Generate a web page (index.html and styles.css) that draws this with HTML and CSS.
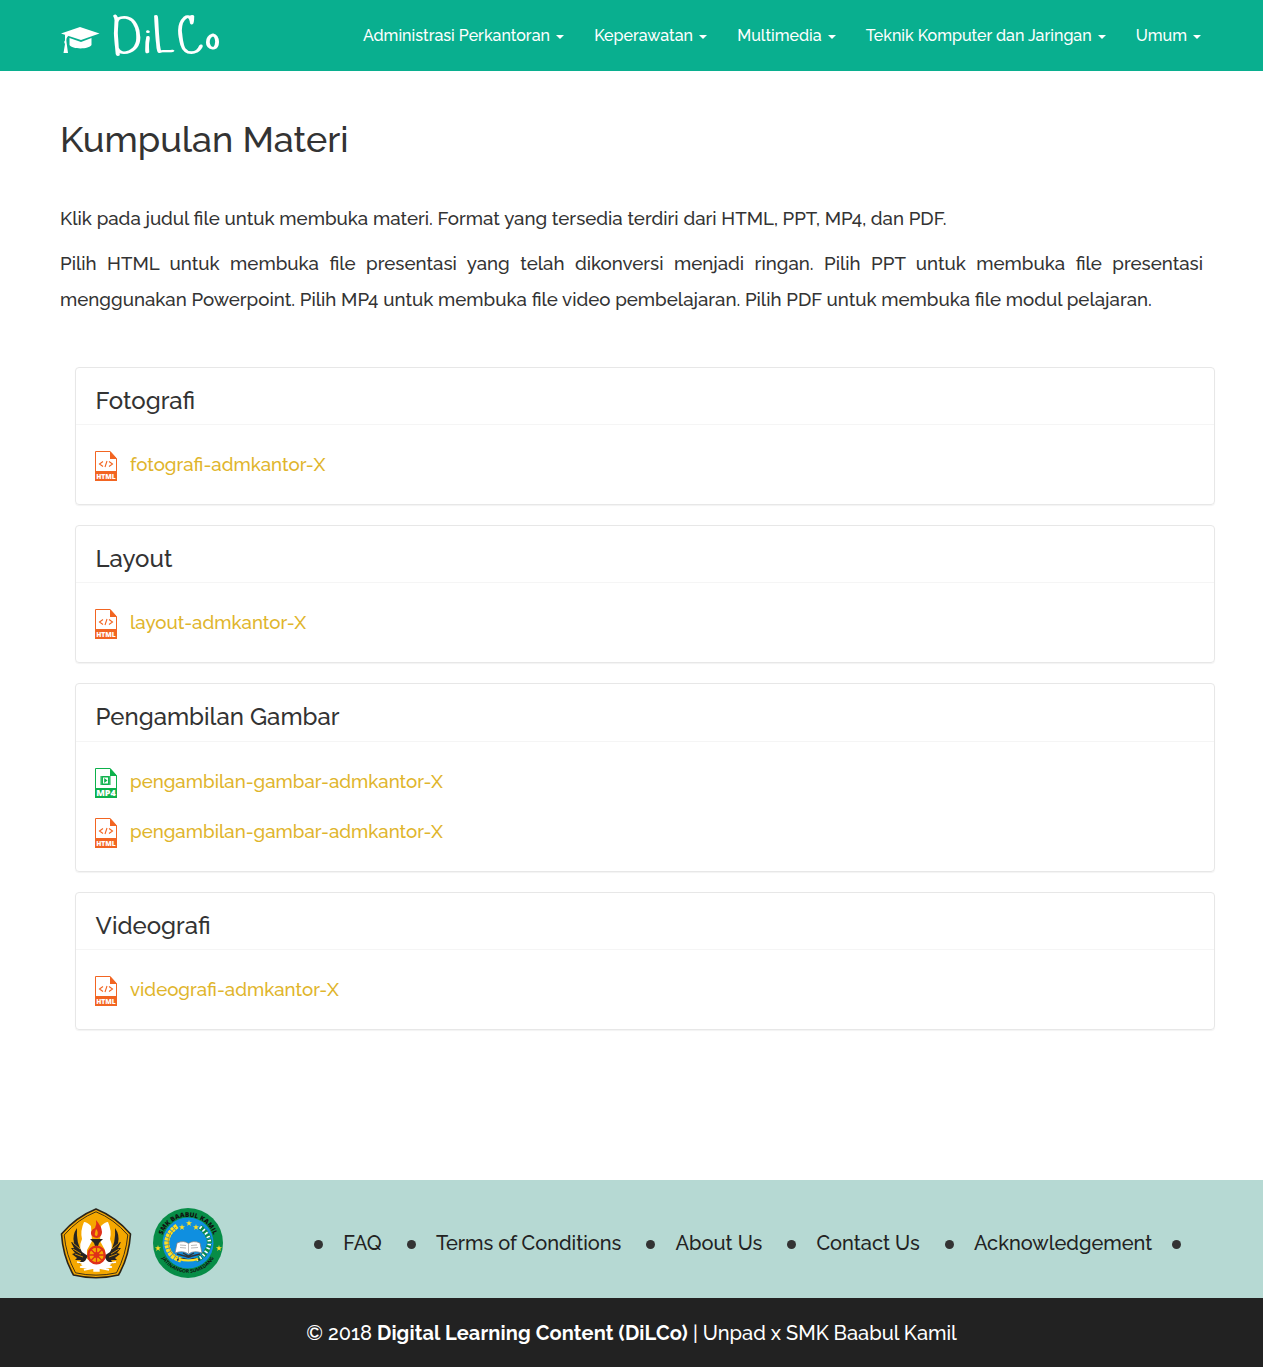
FILE: index.html
```html
<!DOCTYPE html>
<html lang="id">
<head>
<meta charset="utf-8">
<title>DiLCo - Kumpulan Materi</title>
<link rel="stylesheet" href="styles.css">
</head>
<body>
<svg class="defs" aria-hidden="true">
  <symbol id="icon-html" viewBox="0 0 22 30">
    <path d="M.5.5H15L21.500 7.500V29.500H.5z" fill="#fff" stroke="#f26522"/>
    <path d="M15 0L22 8H15z" fill="#f26522"/>
    <path d="M0 20H22V30H0z" fill="#f26522"/>
    <path d="M8 10.500L4.500 13L8 15.500M14 10.500L17.500 13L14 15.500M12 10L10 16" fill="none" stroke="#f26522" stroke-width="1.100"/>
    <text x="1.200" y="27.500" textLength="19.600" lengthAdjust="spacingAndGlyphs" class="icon-label">HTML</text>
  </symbol>
  <symbol id="icon-mp4" viewBox="0 0 22 30">
    <path d="M.5.5H15L21.500 7.500V29.500H.5z" fill="#fff" stroke="#0db14b"/>
    <path d="M15 0L22 8H15z" fill="#0db14b"/>
    <path d="M0 20H22V30H0z" fill="#0db14b"/>
    <path d="M5.500 8H15.500V17H5.500z" fill="#0db14b"/>
    <path d="M8 9.500H13V15.500H8z" fill="#fff"/>
    <path d="M9.200 10L12.500 12.500L9.200 15z" fill="#0db14b"/>
    <path d="M6.700 8.500V17M14.300 8.500V17" stroke="#fff" stroke-width=".4" stroke-dasharray="1 1"/>
    <text x="1.200" y="28.300" textLength="19.600" lengthAdjust="spacingAndGlyphs" class="icon-label icon-label-lg">MP4</text>
  </symbol>
</svg>

<header class="navbar">
  <a class="brand" href="#">
    <svg class="cap" viewBox="0 0 40 28" width="40" height="28">
      <path d="M1 7.500L20 1L39.500 7.500L21 14z" fill="#fff"/>
      <path d="M9.500 12L21 16L31.500 12V19C29 23.500 12 23.500 9.500 19z" fill="#fff"/>
      <path d="M5 8.500L9 9.500C6.500 11 6 13 6.500 16L8 27H3.500L5 18C4 16.500 4 15.500 5 14.500z" fill="#fff"/>
    </svg>
    <span class="wordmark">Di<span class="drop">L</span>C<span class="raise">o</span></span>
  </a>
  <nav class="menu">
    <a href="#">Administrasi Perkantoran</a>
    <a href="#">Keperawatan</a>
    <a href="#">Multimedia</a>
    <a href="#">Teknik Komputer dan Jaringan</a>
    <a href="#">Umum</a>
  </nav>
</header>

<main class="content">
  <h1>Kumpulan Materi</h1>
  <p class="lead">Klik pada judul file untuk membuka materi. Format yang tersedia terdiri dari HTML, PPT, MP4, dan PDF.</p>
  <p class="lead">Pilih HTML untuk membuka file presentasi yang telah dikonversi menjadi ringan. Pilih PPT untuk membuka file presentasi menggunakan Powerpoint. Pilih MP4 untuk membuka file video pembelajaran. Pilih PDF untuk membuka file modul pelajaran.</p>

  <div class="cards">
    <section class="card">
      <h2>Fotografi</h2>
      <ul>
        <li><svg class="file"><use href="#icon-html"/></svg><a href="#">fotografi-admkantor-X</a></li>
      </ul>
    </section>
    <section class="card">
      <h2>Layout</h2>
      <ul>
        <li><svg class="file"><use href="#icon-html"/></svg><a href="#">layout-admkantor-X</a></li>
      </ul>
    </section>
    <section class="card">
      <h2>Pengambilan Gambar</h2>
      <ul>
        <li><svg class="file"><use href="#icon-mp4"/></svg><a href="#">pengambilan-gambar-admkantor-X</a></li>
        <li><svg class="file"><use href="#icon-html"/></svg><a href="#">pengambilan-gambar-admkantor-X</a></li>
      </ul>
    </section>
    <section class="card">
      <h2>Videografi</h2>
      <ul>
        <li><svg class="file"><use href="#icon-html"/></svg><a href="#">videografi-admkantor-X</a></li>
      </ul>
    </section>
  </div>
</main>

<footer>
  <div class="footer-top">
    <svg class="seal" viewBox="0 0 72 72" width="72" height="72">
      <path d="M36 2Q56 10 70.500 27Q69 50 58.500 68Q36 73.500 13.500 68Q3 50 1.500 27Q16 10 36 2z" fill="#f5a800" stroke="#2a2418" stroke-width="1.600" stroke-linejoin="round"/>
      <path d="M36 4.800Q54 12 67.800 28Q66 48 56.500 65.800Q36 70.500 15.500 65.800Q6 48 4.200 28Q18 12 36 4.800z" fill="none" stroke="#2a2418" stroke-width=".9"/>
      <path d="M24 15Q27 15 31 19L32 34L27 43V52L35 56V62H28L21 58L25 52Q17 42 22 32Q20 24 24 15z" fill="#fff"/>
      <path d="M48 15Q45 15 41 19L40 34L45 43V52L37 56V62H44L51 58L47 52Q55 42 50 32Q52 24 48 15z" fill="#fff"/>
      <path d="M17 21Q12 28 14 36L11 35L14 41L11 41L15 46L12 47L17 51L15 53L21 53L19 57L25 54L28 49L22 45Q16 36 17 21z" fill="#262320"/>
      <path d="M55 21Q60 28 58 36L61 35L58 41L61 41L57 46L60 47L55 51L57 53L51 53L53 57L47 54L44 49L50 45Q56 36 55 21z" fill="#262320"/>
      <path d="M13 36L20 42M13 42L21 47M15 47L23 50M59 36L52 42M59 42L51 47M57 47L49 50" stroke="#f5a800" stroke-width=".8"/>
      <path d="M17 55L27 57L32 60L27 59L20 60L28 61L24 63L34 61V64H39V61L49 63L44 61L52 60L45 59L40 60L45 57L56 55" fill="#fff" stroke="#fff" stroke-width="1.400"/>
      <path d="M30 32H43L39 36L38 39H35L34 36z" fill="#262320"/>
      <path d="M36 13Q42 20 42 25Q42 30 37 31Q30 30 31 25Q32 22 35 21Q37 17 36 13z" fill="#df3019"/>
      <path d="M36 22Q39 25 37 29Q34 29 35 26z" fill="#f5a800"/>
      <circle cx="36.500" cy="48" r="8.300" fill="#f5a800" stroke="#df3019" stroke-width="2.300"/>
      <circle cx="36.500" cy="48" r="3" fill="#df3019"/>
      <path d="M36.500 40V56M28.500 48H44.500M31 42.500L42 53.500M42 42.500L31 53.500" stroke="#df3019" stroke-width="1.300"/>
    </svg>
    <svg class="seal" viewBox="0 0 72 72" width="72" height="72">
      <defs>
        <path id="arc-top" d="M9.500 42A27 27 0 1 1 62.500 42"/>
        <path id="arc-bottom" d="M6.500 43A30.500 30.500 0 0 0 65.500 43"/>
      </defs>
      <circle cx="36" cy="36" r="35" fill="#078d47"/>
      <circle cx="36" cy="36" r="25.500" fill="#0f8fe0"/>
      <text class="seal-top"><textPath href="#arc-top" startOffset="50%">SMK BAABUL KAMIL</textPath></text>
      <text class="seal-bottom"><textPath href="#arc-bottom" startOffset="50%">JATINANGOR SUMEDANG</textPath></text>
      <g fill="#ffdf24">
        <path id="star" d="M37 13L37.700 15.300H40L38.200 16.800L38.900 19L37 17.600L35.100 19L35.800 16.800L34 15.300H36.300z"/>
        <use href="#star" x="-7" y="4"/>
        <use href="#star" x="7" y="4"/>
        <use href="#star" x="-31" y="25"/>
        <use href="#star" x="30" y="25"/>
      </g>
      <path d="M25 19Q9 31 18 46Q21 51 29 53" fill="none" stroke="#ffdf24" stroke-width="5" stroke-dasharray="3 .8"/>
      <path d="M24 20Q11 31 19 45Q22 50 29 53" fill="none" stroke="#b98a13" stroke-width=".8"/>
      <path d="M48 20Q63 32 54 45Q51 50 44 53" fill="none" stroke="#0b8b48" stroke-width="5" stroke-dasharray="4 1"/>
      <path d="M48 20Q63 32 54 45Q51 50 44 53" fill="none" stroke="#fff" stroke-width="3.500" stroke-dasharray="1.500 2.500"/>
      <path d="M25 36Q32 33 36.500 36.500Q41 33 48 36L50 46Q42 43 36.500 47Q31 43 23 46z" fill="#fff" stroke="#777" stroke-width=".7"/>
      <path d="M36.500 37V46M28 38L34 38.500M28 40.500L34 41M39 38.500L45 38M39 41L46 40.500" stroke="#999" stroke-width=".7"/>
      <path d="M25 47L48 53M48 47L25 53M31 46L36.500 49L42 46" fill="none" stroke="#333" stroke-width="1.400"/>
      <path d="M27 52Q36 55 46 52" fill="none" stroke="#ffdf24" stroke-width="2"/>
    </svg>
    <ul class="links">
      <li><a href="#">FAQ</a></li>
      <li><a href="#">Terms of Conditions</a></li>
      <li><a href="#">About Us</a></li>
      <li><a href="#">Contact Us</a></li>
      <li><a href="#">Acknowledgement</a></li>
    </ul>
  </div>
  <div class="copyright">© 2018 <b>Digital Learning Content (DiLCo)</b> | Unpad x SMK Baabul Kamil</div>
</footer>
</body>
</html>
```
FILE: styles.css
```css
body {
  margin: 0;
  font-family: Raleway, Lato, sans-serif;
  font-weight: 500;
  color: #333;
  background: #fff;
}
a { text-decoration: none; }
ul { list-style: none; margin: 0; padding: 0; }
.defs { display: none; }
.icon-label { font: 800 7px "Open Sans", sans-serif; fill: #fff; }
.icon-label-lg { font-size: 9px; }

.navbar {
  height: 71px;
  box-sizing: border-box;
  padding: 0 62px 0 60px;
  background: #09af8f;
  display: flex;
  justify-content: space-between;
}
.brand { display: flex; color: #fff; }
.cap { margin-top: 26px; }
.wordmark {
  margin-left: 11px;
  height: 71px;
  font: 400 46px/73px "Sue Ellen Francisco", "Lato", sans-serif;
  transform: scaleX(1.42);
  transform-origin: left;
}
.wordmark span { display: inline-block; }
.wordmark .drop { transform: translateY(1px) scaleY(.87); }
.wordmark .raise { transform: translateY(-4px); }
.menu { display: flex; gap: 30.2px; }
.menu a { color: #fff; font-size: 16px; line-height: 72px; }
.menu a::after {
  content: "";
  display: inline-block;
  margin-left: 6px;
  vertical-align: 2px;
  border: 4px solid transparent;
  border-top-color: #fff;
  border-bottom: 0;
}

.content { height: 1109px; box-sizing: border-box; padding: 48px 60px 0; }
h1 { margin: 0 0 41px; font-size: 36px; line-height: 40px; font-weight: 500; }
.lead {
  margin: 0 0 9px;
  font-size: 18.7px;
  line-height: 36px;
  text-align: justify;
}
.cards {
  margin: 49.67px -12px 0 15px;
  display: flex;
  flex-direction: column;
  gap: 20px;
}
.card {
  border: 1px solid #e7e7e7;
  border-radius: 4px;
  box-shadow: 0 1px 1px rgba(0, 0, 0, .05);
}
.card h2 {
  margin: 0;
  padding: 0 20px 0 19.6px;
  height: 56.4px;
  border-bottom: 1px solid #f5f5f5;
  font-size: 24px;
  line-height: 66px;
  font-weight: 500;
}
.card ul { padding: 16px 19px 13px; }
.card li { display: flex; align-items: center; height: 50px; }
.file { width: 22px; height: 30px; margin-right: 13px; }
.card a { color: #dfb52c; font-size: 18.7px; line-height: 28px; margin-top: -4px; }

.footer-top {
  height: 118px;
  box-sizing: border-box;
  padding: 8px 80px 0 60px;
  background: #b6d9d3;
  display: flex;
  align-items: center;
}
.seal { margin-right: 20px; }
.seal-top { font: 800 6.5px "Open Sans", sans-serif; fill: #111; text-anchor: middle; }
.seal-bottom { font: 700 5px "Open Sans", sans-serif; fill: #111; text-anchor: middle; }
.links { display: flex; margin-left: 70px; }
.links li { display: flex; align-items: center; font-size: 20px; }
.links a { color: #222; margin: 0 25px 0 20.2px; }
.links li:last-child a { margin-right: 20px; }
.links li::before,
.links li:last-child::after {
  content: "";
  width: 9px;
  height: 9px;
  border-radius: 50%;
  background: #333;
  margin-top: 3px;
}
.copyright {
  height: 69px;
  background: #222;
  color: #fff;
  font-size: 20px;
  line-height: 71px;
  text-align: center;
}
.copyright b { font-weight: 700; letter-spacing: .13px; }
```
